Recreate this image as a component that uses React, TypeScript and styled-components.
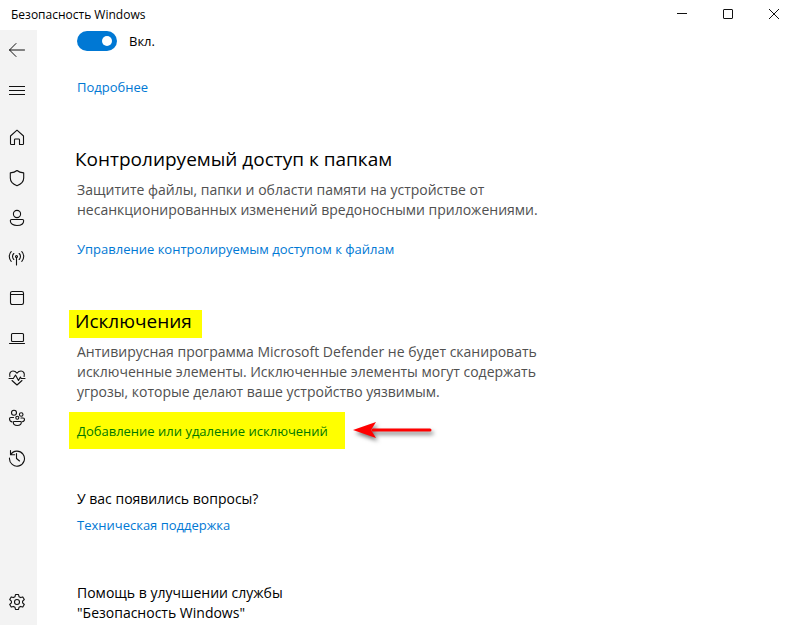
import React from "react";
import styled, { createGlobalStyle, css } from "styled-components";

const GlobalStyle = createGlobalStyle`
  *, *::before, *::after { box-sizing: border-box; }
  html, body, #root { height: 100%; }
  body {
    margin: 0;
    background: #fff;
    color: #000;
    font-family: "Open Sans", "Noto Sans", sans-serif;
  }
  h1, h2, p { margin: 0; font-weight: 400; }
`;

const Window = styled.div`
  display: grid;
  grid-template: 30px 1fr / 37px 1fr;
  min-height: 100%;
`;

const TitleBar = styled.header`
  grid-column: 1 / -1;
  display: flex;
  align-items: center;
  justify-content: space-between;
  padding-left: 11px;
`;

const AppTitle = styled.h1`
  font-size: 12px;
  line-height: 16px;
`;

const WindowControls = styled.div`
  display: flex;
  align-self: stretch;
  margin-right: -5px;
`;

const plainButton = css`
  display: flex;
  align-items: center;
  justify-content: center;
  padding: 0;
  border: 0;
  background: transparent;
  color: #111;
`;

const ControlButton = styled.button`
  ${plainButton}
  width: 46px;
  height: 28px;
`;

const Sidebar = styled.nav`
  display: flex;
  flex-direction: column;
  padding-bottom: 3px;
  background: #f3f3f3;
`;

const NavButton = styled.button`
  ${plainButton}
  height: 40px;
  padding-right: 3px;
`;

const NavGroup = styled.div`
  display: flex;
  flex-direction: column;
  flex: 1;
  padding-top: 8px;
`;

const Content = styled.main`
  padding: 1px 40px 0;
  overflow: hidden;
`;

const ToggleRow = styled.label`
  display: flex;
  align-items: center;
  gap: 12px;
  font-size: 13px;
  line-height: 20px;
`;

const Toggle = styled.input`
  appearance: none;
  display: flex;
  align-items: center;
  justify-content: flex-end;
  width: 40px;
  height: 20px;
  margin: 0;
  padding: 0 5px;
  border-radius: 10px;
  background: #0078d4;

  &:not(:checked) { justify-content: flex-start; background: #777; }
  &::before {
    content: "";
    width: 10px;
    height: 10px;
    border-radius: 50%;
    background: #fff;
  }
`;

const Section = styled.section<{ $gap: number }>`
  margin-top: ${(p) => p.$gap}px;
`;

const Heading = styled.h2`
  margin-left: -2px;
  font-size: 19px;
  line-height: 24px;
`;

const Mark = styled.span`
  display: inline-block;
  margin: 0 0 -6px -6px;
  padding: 0 10px 6px 6px;
  background: #ff0;
  line-height: 22px;
`;

const Description = styled.p`
  margin-top: 9px;
  color: #505050;
  font-size: 14px;
  line-height: 20px;
`;

const Link = styled.a<{ $marked?: boolean }>`
  display: inline-block;
  color: #0078d4;
  font-size: 13px;
  line-height: 21px;
  text-decoration: none;
  ${(p) =>
    p.$marked &&
    css`
      margin-left: -8px;
      padding: 9px 17px 7px 8px;
      background: #ff0;
      color: #007800;
    `}
`;

const LinkRow = styled.div<{ $gap: number }>`
  display: flex;
  align-items: center;
  margin-top: ${(p) => p.$gap}px;
`;

const Arrow = styled.svg`
  margin-left: 4px;
  overflow: visible;
  filter: drop-shadow(2px 3px 2px rgba(0, 0, 0, 0.55));
`;

const SubHeading = styled.h2`
  font-size: 14px;
  line-height: 20px;
`;

const Icon = ({ children }: { children: React.ReactNode }) => (
  <svg width="18" height="18" viewBox="0 0 18 18" fill="none" stroke="currentColor" strokeWidth="1.1" strokeLinecap="round" strokeLinejoin="round" aria-hidden="true">
    {children}
  </svg>
);

const BackIcon = <Icon><path d="M16.500 9H1.500M8 2.500 1.500 9 8 15.500" strokeWidth="1" /></Icon>;
const MenuIcon = <Icon><path d="M1 5.500h16M1 9.500h16M1 13.500h16" strokeWidth="1" strokeLinecap="butt" /></Icon>;

const navItems = [
  { label: "Главная", icon: <Icon><path d="M2.500 7 9 1.200l6.500 5.800v7.700q0 .8-.8.8h-3.200v-4.700q0-.8-.8-.8H7.300q-.8 0-.8.8v4.700H3.300q-.8 0-.8-.8Z" /></Icon> },
  { label: "Защита от вирусов и угроз", icon: <Icon><path d="M9 1.500C7.300 3 5 3.700 2.300 3.900V9c0 3.600 2.600 6.100 6.700 7.700 4.100-1.600 6.700-4.100 6.700-7.700V3.900C13 3.700 10.700 3 9 1.500Z" /></Icon> },
  { label: "Защита учетных записей", icon: <Icon><circle cx="9" cy="5" r="3.600" /><path d="M3.600 10.500h10.800q1.300 0 1.300 1.300c0 3-3 4.700-6.700 4.700s-6.700-1.700-6.700-4.700q0-1.300 1.300-1.300Z" /></Icon> },
  { label: "Брандмауэр и безопасность сети", icon: <Icon><circle cx="8.500" cy="7.500" r="1" /><path d="M8.500 8.500v7.500M5.800 10.500a4.200 4.200 0 0 1 0-6M11.200 10.500a4.200 4.200 0 0 0 0-6M3.200 12.300a7 7 0 0 1 0-9.600M13.800 12.300a7 7 0 0 0 0-9.600" /></Icon> },
  { label: "Управление приложениями и браузером", icon: <Icon><rect x="2.500" y="2.500" width="13" height="13" rx="1.700" /><path d="M2.500 5.500h13" /></Icon> },
  { label: "Безопасность устройства", icon: <Icon><rect x="3.500" y="4.500" width="12" height="8" rx="1" /><path d="M1.500 14.500h15" /></Icon> },
  { label: "Производительность и работоспособность", icon: <Icon><path d="M1.900 7.500C1 4.500 2.500 2 5 2c1.800 0 3 .8 4 2.200C10 2.800 11.200 2 13 2c2.500 0 4 2.500 3.100 5.500M1 9.500h4.300L7.500 6l3 5.500 1.900-3.400.8 1.400H17M4 11.500l5 4.500 5-4.500" /></Icon> },
  { label: "Параметры для семьи", icon: <Icon><circle cx="6" cy="3.800" r="2.500" /><circle cx="13.200" cy="5.500" r="1.800" /><circle cx="9.300" cy="8.800" r="1.500" /><path d="M5.500 8.500H2.800q-1.300 0-1.300 1.200c0 1.700 1 2.800 2.500 3.200M13 9h2q1.500 0 1.500 1.200c0 1.400-.9 2.300-2.200 2.500M6 12.500h6.500q.8 0 .8.8c0 1.900-1.600 3.200-4 3.200s-4-1.300-4-3.200q0-.8.800-.8Z" /></Icon> },
  { label: "Журнал защиты", icon: <Icon><path d="M2.500 1.500v4.200h4.200M2.600 5.700A7.500 7.500 0 1 1 1.500 9M8.500 4.500v5l3 2.500" /></Icon> },
];

const SettingsIcon = (
  <Icon>
    <circle cx="9" cy="9" r="2.500" />
    <path d="M7.500 1.500h3l.5 2.200 1.600.9 2.200-.7 1.500 2.600-1.700 1.600v1.800l1.700 1.600-1.500 2.600-2.200-.7-1.600.9-.5 2.200h-3L7 14.300l-1.600-.9-2.200.7-1.500-2.600 1.700-1.600V8.100L1.700 6.500l1.500-2.600 2.200.7L7 3.700Z" />
  </Icon>
);

export default function App() {
  return (
    <>
      <GlobalStyle />
      <Window>
        <TitleBar>
          <AppTitle>Безопасность Windows</AppTitle>
          <WindowControls>
            <ControlButton aria-label="Свернуть">
              <svg width="10" height="10" stroke="currentColor"><path d="M0 4.500h10" /></svg>
            </ControlButton>
            <ControlButton aria-label="Развернуть">
              <svg width="10" height="10" fill="none" stroke="currentColor"><rect x=".5" y=".5" width="9" height="9" rx=".5" /></svg>
            </ControlButton>
            <ControlButton aria-label="Закрыть">
              <svg width="10" height="10" stroke="currentColor"><path d="m0 0 10 10M10 0 0 10" /></svg>
            </ControlButton>
          </WindowControls>
        </TitleBar>
        <Sidebar aria-label="Навигация">
          <NavButton aria-label="Назад">{BackIcon}</NavButton>
          <NavButton aria-label="Меню">{MenuIcon}</NavButton>
          <NavGroup>
            {navItems.map((item) => (
              <NavButton key={item.label} aria-label={item.label}>{item.icon}</NavButton>
            ))}
          </NavGroup>
          <NavButton aria-label="Параметры">{SettingsIcon}</NavButton>
        </Sidebar>
        <Content>
          <ToggleRow>
            <Toggle type="checkbox" role="switch" defaultChecked />
            <span>Вкл.</span>
          </ToggleRow>
          <LinkRow $gap={26}><Link href="#more">Подробнее</Link></LinkRow>
          <Section $gap={49}>
            <Heading>Контролируемый доступ к папкам</Heading>
            <Description>
              Защитите файлы, папки и области памяти на устройстве от<br />
              несанкционированных изменений вредоносными приложениями.
            </Description>
            <LinkRow $gap={19}><Link href="#folders">Управление контролируемым доступом к файлам</Link></LinkRow>
          </Section>
          <Section $gap={49}>
            <Heading><Mark>Исключения</Mark></Heading>
            <Description>
              Антивирусная программа Microsoft Defender не будет сканировать<br />
              исключенные элементы. Исключенные элементы могут содержать<br />
              угрозы, которые делают ваше устройство уязвимым.
            </Description>
            <LinkRow $gap={10}>
              <Link href="#exclusions" $marked>Добавление или удаление исключений</Link>
              <Arrow width="84" height="20" viewBox="0 0 84 20" aria-hidden="true">
                <path d="M24 9h57" stroke="#f00" strokeWidth="3" strokeLinecap="round" />
                <path d="M4 9 27 1l-5 8 5 8Z" fill="#f00" />
              </Arrow>
            </LinkRow>
          </Section>
          <Section $gap={40}>
            <SubHeading>У вас появились вопросы?</SubHeading>
            <LinkRow $gap={6}><Link href="#support">Техническая поддержка</Link></LinkRow>
          </Section>
          <Section $gap={47}>
            <SubHeading>
              Помощь в улучшении службы<br />
              "Безопасность Windows"
            </SubHeading>
          </Section>
        </Content>
      </Window>
    </>
  );
}
